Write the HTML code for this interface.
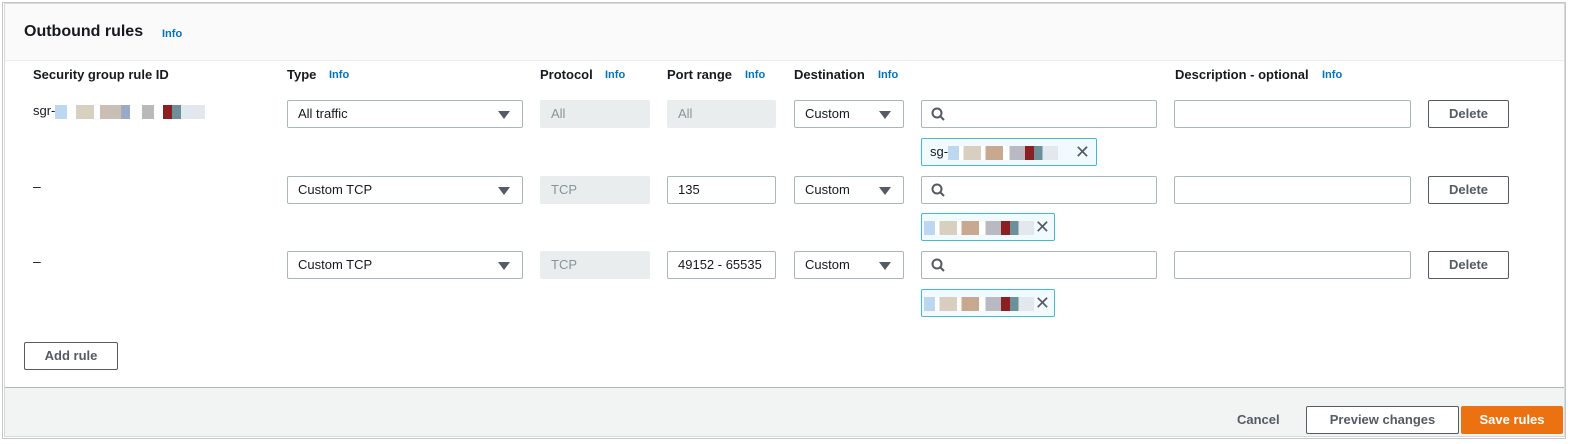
<!DOCTYPE html>
<html><head><meta charset="utf-8"><style>
*{box-sizing:border-box;margin:0;padding:0}
body{width:1576px;height:444px;background:#fff;font-family:"Liberation Sans",Arial,sans-serif;color:#16191f;position:relative;overflow:hidden;font-size:14px}
.a{position:absolute}
.frame{left:2px;top:2px;width:1564px;height:437px;border:1px solid #c6c6c6}
.panel{left:4px;top:3px;width:1561px;height:434px;border:1px solid #d5dbdb;background:#fff}
.hdr{left:5px;top:4px;width:1559px;height:57px;background:#fafafa;border-bottom:1px solid #eaeded}
.ft{left:5px;top:387px;width:1559px;height:49px;background:#f2f3f3;border-top:1px solid #aab7b8}
.h{font-weight:bold;font-size:13px;top:67px}
.i{font-weight:bold;font-size:11px;color:#0073bb;top:69px}
.in{height:28px;border:1px solid #aab7b8;border-radius:2px;background:#fff;font-size:13px;padding-left:10px;line-height:26px}
.dis{background:#eaeded;border-color:#eaeded;color:#879596}
.sel:after{content:"";position:absolute;right:12px;top:10px;border-left:6px solid transparent;border-right:6px solid transparent;border-top:8px solid #545b64}
.btn{height:28px;border:1px solid #545b64;border-radius:2px;background:#fff;font-weight:bold;font-size:13px;color:#545b64;text-align:center;line-height:26px}
.tok{height:28px;border:1px solid #44b9d6;background:#f1faff;border-radius:2px;font-size:13px;line-height:26px;padding-left:8px}
.px{display:inline-block;vertical-align:middle;height:14px}
.x{position:absolute;right:6px;top:0;font-size:18px;color:#545b64}
</style></head><body>
<div class="a frame"></div><div class="a panel"></div>
<div class="a hdr"></div>
<div class="a" style="left:24px;top:23px;font-size:16px;font-weight:bold">Outbound rules</div>
<div class="a" style="left:162px;top:28px;font-size:11px;font-weight:bold;color:#0073bb">Info</div>

<div class="a h" style="left:33px">Security group rule ID</div>
<div class="a h" style="left:287px">Type</div><div class="a i" style="left:329px">Info</div>
<div class="a h" style="left:540px">Protocol</div><div class="a i" style="left:605px">Info</div>
<div class="a h" style="left:667px">Port range</div><div class="a i" style="left:745px">Info</div>
<div class="a h" style="left:794px">Destination</div><div class="a i" style="left:878px">Info</div>
<div class="a h" style="left:1175px">Description - optional</div><div class="a i" style="left:1322px">Info</div>

<div class="a" style="left:33px;top:103px;font-size:13px">sgr-<span class="px" style="width:150px;background:linear-gradient(90deg,#bcd7f0 0 8%,#fff 8% 14%,#d8cfc0 14% 26%,#fff 26% 30%,#c9bfb4 30% 44%,#9aa9c8 44% 50%,#fff 50% 58%,#b9b9b9 58% 66%,#fff 66% 72%,#8b2020 72% 78%,#6d8f9a 78% 84%,#e3e7ee 84% 100%)"></span></div>
<div class="a" style="left:33px;top:178px">–</div>
<div class="a" style="left:33px;top:253px">–</div>

<div class="a in sel" style="left:287px;top:100px;width:236px">All traffic</div>
<div class="a in dis" style="left:540px;top:100px;width:110px">All</div>
<div class="a in dis" style="left:667px;top:100px;width:109px">All</div>
<div class="a in sel" style="left:794px;top:100px;width:110px">Custom</div>

<div class="a in sel" style="left:287px;top:176px;width:236px">Custom TCP</div>
<div class="a in dis" style="left:540px;top:176px;width:110px">TCP</div>
<div class="a in" style="left:667px;top:176px;width:109px">135</div>
<div class="a in sel" style="left:794px;top:176px;width:110px">Custom</div>

<div class="a in sel" style="left:287px;top:251px;width:236px">Custom TCP</div>
<div class="a in dis" style="left:540px;top:251px;width:110px">TCP</div>
<div class="a in" style="left:667px;top:251px;width:109px">49152 - 65535</div>
<div class="a in sel" style="left:794px;top:251px;width:110px">Custom</div>

<div class="a in" style="left:921px;top:100px;width:236px"><svg width="14" height="14" style="position:absolute;left:9px;top:6px"><circle cx="6" cy="6" r="4.5" fill="none" stroke="#545b64" stroke-width="2"/><line x1="9.5" y1="9.5" x2="13" y2="13" stroke="#545b64" stroke-width="2"/></svg></div>
<div class="a in" style="left:921px;top:176px;width:236px"><svg width="14" height="14" style="position:absolute;left:9px;top:6px"><circle cx="6" cy="6" r="4.5" fill="none" stroke="#545b64" stroke-width="2"/><line x1="9.5" y1="9.5" x2="13" y2="13" stroke="#545b64" stroke-width="2"/></svg></div>
<div class="a in" style="left:921px;top:251px;width:236px"><svg width="14" height="14" style="position:absolute;left:9px;top:6px"><circle cx="6" cy="6" r="4.5" fill="none" stroke="#545b64" stroke-width="2"/><line x1="9.5" y1="9.5" x2="13" y2="13" stroke="#545b64" stroke-width="2"/></svg></div>

<div class="a in" style="left:1174px;top:100px;width:237px"></div>
<div class="a in" style="left:1174px;top:176px;width:237px"></div>
<div class="a in" style="left:1174px;top:251px;width:237px"></div>

<div class="a btn" style="left:1428px;top:100px;width:81px">Delete</div>
<div class="a btn" style="left:1428px;top:176px;width:81px">Delete</div>
<div class="a btn" style="left:1428px;top:251px;width:81px">Delete</div>

<div class="a tok" style="left:921px;top:138px;width:176px">sg-<span class="px" style="width:110px;background:linear-gradient(90deg,#bcd7f0 0 10%,#fff 10% 14%,#d8cfc0 14% 30%,#fff 30% 34%,#c9a890 34% 50%,#fff 50% 56%,#b9b9c4 56% 70%,#8b2020 70% 78%,#6d8f9a 78% 86%,#e3e7ee 86% 100%)"></span><span class="x">✕</span></div>
<div class="a tok" style="left:921px;top:213px;width:134px;padding-left:2px"><span class="px" style="width:110px;background:linear-gradient(90deg,#bcd7f0 0 10%,#fff 10% 14%,#d8cfc0 14% 30%,#fff 30% 34%,#c9a890 34% 50%,#fff 50% 56%,#b9b9c4 56% 70%,#8b2020 70% 78%,#6d8f9a 78% 86%,#e3e7ee 86% 100%)"></span><span class="x" style="right:4px">✕</span></div>
<div class="a tok" style="left:921px;top:289px;width:134px;padding-left:2px"><span class="px" style="width:110px;background:linear-gradient(90deg,#bcd7f0 0 10%,#fff 10% 14%,#d8cfc0 14% 30%,#fff 30% 34%,#c9a890 34% 50%,#fff 50% 56%,#b9b9c4 56% 70%,#8b2020 70% 78%,#6d8f9a 78% 86%,#e3e7ee 86% 100%)"></span><span class="x" style="right:4px">✕</span></div>

<div class="a btn" style="left:24px;top:342px;width:94px">Add rule</div>

<div class="a ft"></div>
<div class="a" style="left:1237px;top:412px;font-size:13px;font-weight:bold;color:#545b64">Cancel</div>
<div class="a btn" style="left:1306px;top:406px;width:153px">Preview changes</div>
<div class="a btn" style="left:1461px;top:406px;width:102px;background:#ec7211;border-color:#ec7211;color:#fff">Save rules</div>
</body></html>
